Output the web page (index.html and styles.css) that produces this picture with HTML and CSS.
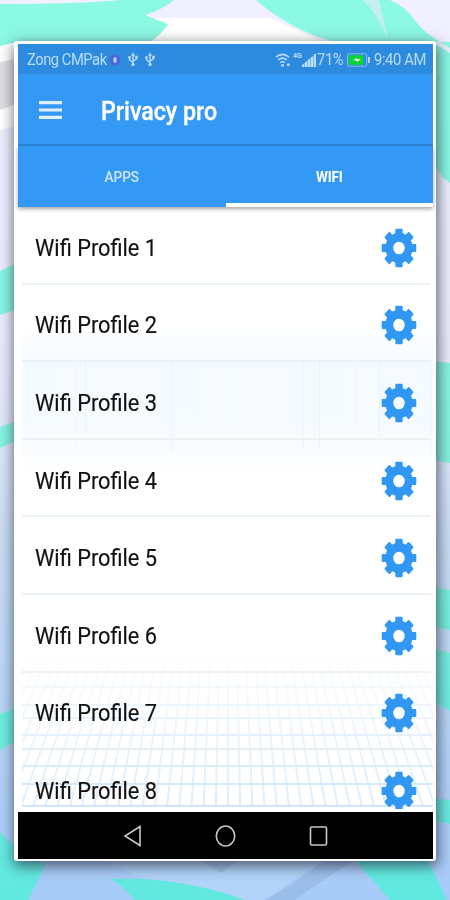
FILE: index.html
```html
<!DOCTYPE html>
<html lang="en">
<head>
<meta charset="utf-8">
<title>Privacy pro</title>
<link rel="stylesheet" href="styles.css">
</head>
<body>
<svg class="backdrop" viewBox="0 0 450 900" preserveAspectRatio="none" aria-hidden="true">
  <defs>
    <linearGradient id="sky" x1="0" y1="0" x2="0" y2="1">
      <stop offset="0" stop-color="#f0f0fe"/><stop offset=".42" stop-color="#e8eafa"/>
      <stop offset=".6" stop-color="#c8dcf3"/><stop offset="1" stop-color="#a6cbf8"/>
    </linearGradient>
    <linearGradient id="mint" gradientUnits="userSpaceOnUse" x1="0" y1="0" x2="0" y2="900">
      <stop offset="0" stop-color="#8cf9e2"/><stop offset=".5" stop-color="#84f2de"/><stop offset="1" stop-color="#60e8df"/>
    </linearGradient>
  </defs>
  <rect width="450" height="900" fill="url(#sky)"/>
  <path fill="#fff" d="M0 18H270L330 45H0Z"/>
  <path fill="#fff" d="M0 44H20V125L0 130Z"/>
  <path fill="#dedede" d="M0 62L20 58V103L0 110Z"/>
  <g fill="url(#mint)">
    <path d="M0 4Q80 4 120 0H174Q164 9 145 15L168 24Q162 34 150 42H16L0 46Z"/>
    <path d="M256 0Q290 30 335 42H450V48Q425 35 413 18Q406 7 390 0Z"/>
    <path d="M432 42L450 53V183Q438 175 432 160Z"/>
    <path d="M0 271L18 262V309L0 315ZM0 427L18 420V440L0 448Z"/>
    <path d="M432 361L450 363V463L432 460ZM432 587L450 590V630L432 626ZM432 648L450 653V711L432 700ZM432 798L450 800V824L432 820Z"/>
    <path d="M0 714L18 707V740L0 750ZM0 832Q20 855 46 864L28 900H0Z"/>
  </g>
  <path fill="#b1d3f7" d="M110 855H330L265 900H200Q150 885 110 862Z"/>
  <path fill="#8faed6" opacity=".45" d="M200 860H240L221 873ZM265 900Q300 880 325 860H355Q325 878 295 900Z"/>
  <g fill="url(#mint)">
    <path d="M110 879Q180 876 245 900H135Q122 885 110 879Z"/>
    <path d="M355 860H428L447 900H390Z"/>
  </g>
  <path fill="#e8e9f8" opacity=".6" d="M379 0L388 39Q376 12 363 0Z"/>
</svg>

<svg class="sprites" aria-hidden="true">
  <symbol id="gear" viewBox="-18 -18 36 36" preserveAspectRatio="none">
    <circle r="9.700" fill="none" stroke="currentColor" stroke-width="8"/>
    <g fill="currentColor">
      <rect id="tooth" x="-3.700" y="-17.300" width="7.400" height="6" rx="1"/>
      <use href="#tooth" transform="rotate(45)"/>
      <use href="#tooth" transform="rotate(90)"/>
      <use href="#tooth" transform="rotate(135)"/>
      <use href="#tooth" transform="rotate(180)"/>
      <use href="#tooth" transform="rotate(225)"/>
      <use href="#tooth" transform="rotate(270)"/>
      <use href="#tooth" transform="rotate(315)"/>
    </g>
  </symbol>
  <symbol id="usb" viewBox="0 0 12 16">
    <path fill="none" stroke="currentColor" stroke-width="1.5" d="M6 3V13M6 11L2.3 8.5V6M6 9.5L9.7 7.5V5"/>
    <path fill="currentColor" d="M6 .5L8.3 4H3.7ZM.9 4.5h2.8v2.5H.9ZM8.3 4h2.8v2.6H8.3Z"/><circle cx="6" cy="13.4" r="1.7" fill="currentColor"/>
  </symbol>
</svg>

<main class="phone">
  <div class="status">
    <span class="label carrier"><span>Zong CMPak</span></span>
    <svg class="badge" viewBox="0 0 12 12"><circle cx="6" cy="6" r="5.5" fill="#4b66dc"/><path d="M4.500 3.500h3v5h-3z" fill="#b9d9fa"/></svg>
    <svg class="usb"><use href="#usb"/></svg>
    <svg class="usb second"><use href="#usb"/></svg>
    <svg class="wifi" viewBox="0 0 16 14"><g fill="none" stroke="currentColor" stroke-width="1.5"><path d="M.8 4.2Q7.5-1.5 14.2 4.2M3 7Q7.5 3.3 12 7M5.2 9.6Q7.5 7.8 9.8 9.6"/></g><path fill="currentColor" d="M6.2 11h2.6v2.5H6.2zM12 10.5h2.6v2.5H12z"/></svg>
    <span class="net">4G</span>
    <svg class="signal" viewBox="0 0 14 14"><path fill="currentColor" opacity=".55" d="M0 12L14 0V14H0Z"/><path fill="currentColor" d="M0 11.500h2v2.500H0zM3 9h2v5H3zM6 6.500h2V14H6zM9 4h2v10H9zM12 1H14v13h-2z"/></svg>
    <span class="label percent"><span>71%</span></span>
    <svg class="battery" viewBox="0 0 24 14"><rect x=".6" y=".8" width="19" height="12.400" rx="1" fill="none" stroke="#86bdf2" stroke-width="1"/><path fill="currentColor" d="M21 4h1.800v6H21z"/><path fill="#0ed431" d="M1.800 2.200h14.700v9.600H1.800z"/><path fill="#d8ffe3" d="M6 7L10 5v1h4L10 9V8z"/></svg>
    <span class="label clock"><span>9:40 AM</span></span>
  </div>
  <header class="toolbar">
    <svg class="menu" viewBox="0 0 23 18"><path fill="#e0f0ff" d="M0 0h23v3.200H0zM0 7.400h23v3.200H0zM0 14.800h23V18H0z"/></svg>
    <h1 class="label title"><span>Privacy pro</span></h1>
  </header>
  <nav class="tabs">
    <div class="tab"><span class="label"><span>APPS</span></span></div>
    <div class="tab active"><span class="label"><span>WIFI</span></span></div>
  </nav>
  <section class="content">
    <svg class="pattern" viewBox="0 0 411 601" preserveAspectRatio="none" aria-hidden="true">
      <defs>
        <linearGradient id="haze" x1="0" y1="0" x2="0" y2="1"><stop offset="0" stop-color="#f3f9ff" stop-opacity="0"/><stop offset=".3" stop-color="#f4faff"/><stop offset=".65" stop-color="#f5faff"/><stop offset="1" stop-color="#f5faff" stop-opacity="0"/></linearGradient>
        <linearGradient id="fade" x1="0" y1="0" x2="0" y2="1"><stop offset="0" stop-color="#fff" stop-opacity="0"/><stop offset=".5" stop-color="#fff" stop-opacity=".5"/><stop offset="1" stop-color="#fff"/></linearGradient>
        <mask id="fadeMask" maskUnits="userSpaceOnUse" x="0" y="440" width="411" height="161"><rect y="440" width="411" height="161" fill="url(#fade)"/></mask>
      </defs>
      <rect y="115" width="411" height="155" fill="url(#haze)"/>
      <path id="threads" stroke="#fff" stroke-opacity=".4" fill="none"/>
      <path stroke="#ebf4fa" fill="none" d="M63.500 155V225M149.500 155V245M281.500 155V240M297.500 150V240M357.500 155V230M408.500 160V250"/>
      <g mask="url(#fadeMask)">
        <path id="rays" stroke="#dcedfc" stroke-width="2" fill="none"/>
        <path stroke="#cfe5f9" stroke-width="1.800" fill="none" d="M0 453H411M0 480H411M0 498H411M0 511H411M0 528H411M0 542H411M0 559H411M0 577H411M0 599H411"/>
      </g>
    </svg>
    <ul class="list">
      <li class="row"><span class="label"><span>Wifi Profile 1</span></span><svg class="gear"><use href="#gear"/></svg></li>
      <li class="row"><span class="label"><span>Wifi Profile 2</span></span><svg class="gear"><use href="#gear"/></svg></li>
      <li class="row"><span class="label"><span>Wifi Profile 3</span></span><svg class="gear"><use href="#gear"/></svg></li>
      <li class="row"><span class="label"><span>Wifi Profile 4</span></span><svg class="gear"><use href="#gear"/></svg></li>
      <li class="row"><span class="label"><span>Wifi Profile 5</span></span><svg class="gear"><use href="#gear"/></svg></li>
      <li class="row"><span class="label"><span>Wifi Profile 6</span></span><svg class="gear"><use href="#gear"/></svg></li>
      <li class="row"><span class="label"><span>Wifi Profile 7</span></span><svg class="gear"><use href="#gear"/></svg></li>
      <li class="row"><span class="label"><span>Wifi Profile 8</span></span><svg class="gear"><use href="#gear"/></svg></li>
    </ul>
  </section>
  <footer class="navbar">
    <svg viewBox="0 0 20 24"><path d="M17.500 2.500V21.500L2.500 12Z"/></svg>
    <svg viewBox="0 0 20 24"><ellipse cx="10" cy="12" rx="9.200" ry="10"/></svg>
    <svg viewBox="0 0 20 24"><rect x="2" y="3" width="16" height="18" rx="1"/></svg>
  </footer>
</main>
<script src="pattern.js"></script>
</body>
</html>
```
FILE: pattern.js
```js
// Perspective floor: rays that spread outwards towards the bottom edge.
const rays = [];
for (let i = -22; i <= 22; i++) {
  rays.push(`M${206 + i * 8.8} 440L${206 + i * 12.2} 600`);
}
document.getElementById("rays").setAttribute("d", rays.join(""));

// Fine vertical threads across the hazy band.
const threads = [];
for (let x = 4; x < 411; x += 7 + (x % 5)) {
  threads.push(`M${x + 0.5} ${145 + (x % 4) * 4}V${235 + (x % 6) * 4}`);
}
document.getElementById("threads").setAttribute("d", threads.join(""));
```
FILE: styles.css
```css
* { box-sizing: border-box; }
body {
  margin: 0;
  width: 450px;
  height: 900px;
  overflow: hidden;
  font-family: Roboto, "Liberation Sans", sans-serif;
  padding: 41px 14px 0;
}
.backdrop { position: absolute; left: 0; top: 0; width: 450px; height: 900px; z-index: -1; }
.sprites { position: absolute; width: 0; height: 0; }
.phone {
  display: flex;
  flex-direction: column;
  width: 422px;
  height: 820px;
  padding: 3px 3px 2px 4px;
  background: #fff;
  border-radius: 3px;
  box-shadow: 1px 4px 14px 1px rgba(35, 40, 60, .7);
}
.label { display: inline-block; line-height: 1; white-space: nowrap; }
.label > span { display: inline-block; transform: scaleY(1.12); }

.status {
  display: flex;
  align-items: center;
  height: 30px;
  padding: 1px 9px 0;
  background: #2d8bdf;
  color: #b9dcfb;
  font-size: 14.8px;
}
.status .label { letter-spacing: -.4px; }
.status .carrier { width: 81px; letter-spacing: -.5px; }
.badge { width: 12px; height: 12px; margin-left: 1px; }
.usb { width: 12px; height: 15px; margin-left: 6px; }
.usb.second { margin-left: 5px; }
.wifi { width: 16px; height: 14px; margin-left: auto; }
.net { width: 9px; margin: -8px 0 0 2px; font-size: 7px; font-weight: 700; }
.signal { width: 14px; height: 14px; }
.percent { width: 26px; margin-left: 1px; }
.battery { width: 24px; height: 14px; margin-left: 4px; }
.clock { margin-left: 3px; width: 50px; }

.toolbar {
  display: flex;
  align-items: center;
  height: 72px;
  padding-left: 21px;
  background: #3498f5;
  border-bottom: 2px solid #2a85d9;
}
.menu { width: 23px; height: 18px; margin-top: 1px; }
.title { margin: 5px 0 0 39px; color: #fff; font-size: 23.2px; font-weight: 500; -webkit-text-stroke: .3px #fff; }

.tabs { display: flex; height: 61px; background: #3498f5; box-shadow: 0 2px 4px rgba(0, 0, 0, .35); z-index: 1; }
.tab {
  display: flex;
  flex: 1;
  align-items: center;
  justify-content: center;
  border-bottom: 0 solid #fff;
  color: #cfe7fe;
  font-size: 13.6px;
  font-weight: 500;
}
.tab.active { padding-top: 4px; border-bottom-width: 4px; color: #fff; font-weight: 700; }
.tab.active .label { letter-spacing: -.15px; }

.content { position: relative; height: 605px; overflow: hidden; background: #fff; flex: none; }
.pattern { position: absolute; left: 4px; top: 0; width: 411px; height: 601px; }
.list { position: relative; height: 602px; margin: 0; padding: 0 2px 0 4px; overflow: hidden; list-style: none; }
.row {
  display: flex;
  align-items: center;
  justify-content: space-between;
  height: 77.6px;
  padding: 6px 14px 0 13px;
  border-bottom: 2px solid rgba(226, 237, 241, .65);
  color: #111;
  font-size: 21.8px;
}
.row .label { -webkit-text-stroke: .15px #111; }
.gear { width: 36px; height: 40px; color: #3097f3; }

.navbar { display: flex; justify-content: center; align-items: center; gap: 72px; height: 47px; background: #000; }
.navbar svg { width: 21px; height: 24px; fill: none; stroke: #c8c8c8; stroke-width: 1.6; }
```
